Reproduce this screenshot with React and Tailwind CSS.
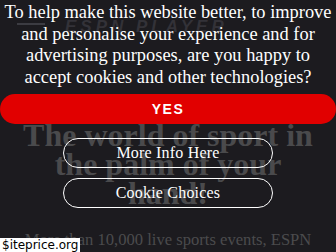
import React from "react";

const serif = { fontFamily: '"Liberation Serif", "Times New Roman", serif' };

export default function App() {
  return (
    <div className="relative h-[252px] w-[336px] overflow-hidden bg-[#1c1b1f]">
      {/* page behind the consent overlay */}
      <div className="flex flex-col items-center pt-[19px]" style={serif}>
        <div className="flex h-[16px] w-full items-start pl-[17px]">
          <div className="mt-[4px] h-[2px] w-[28px] bg-[#3c3c42]" />
          <div className="ml-[20px] font-['Liberation_Sans',sans-serif] text-[17px] font-black italic leading-[16px] tracking-[4px] text-[#333238]">
            ESPN PLAYER
          </div>
        </div>
        <h1 className="mt-[86px] px-4 text-center text-[32px] font-bold leading-[29px] text-[#4a4a4c]">
          The world of sport in the palm of your hand!
        </h1>
        <p className="mt-[21px] text-center text-[16.6px] leading-[22px] text-[#4b4b4d]">
          More than 10,000 live sports events, ESPN
        </p>
      </div>

      {/* consent overlay */}
      <div className="absolute inset-0 flex flex-col items-center" style={serif}>
        <p className="px-[2px] pt-[2px] text-center text-[18.4px] leading-[21.5px] text-white">
          To help make this website better, to improve and personalise your experience and for advertising purposes, are you happy to accept cookies and other technologies?
        </p>
        <button className="mt-[6px] flex h-[30px] w-full items-center justify-center rounded-full bg-[#e10000] font-['Liberation_Sans',sans-serif] text-[14px] font-bold tracking-[1.5px] text-white">
          YES
        </button>
        <button className="mt-[14px] flex h-[30px] w-[210px] items-center justify-center rounded-full border border-white text-[16px] tracking-[0.2px] text-white">
          More Info Here
        </button>
        <button className="mt-[10px] flex h-[30px] w-[210px] items-center justify-center rounded-full border border-white text-[16px] tracking-[0.2px] text-white">
          Cookie Choices
        </button>
      </div>

      <div className="absolute bottom-0 left-0 bg-white px-[2px] font-['DejaVu_Sans',sans-serif] text-[12px] leading-[14px] text-black">
        $iteprice.org
      </div>
    </div>
  );
}
